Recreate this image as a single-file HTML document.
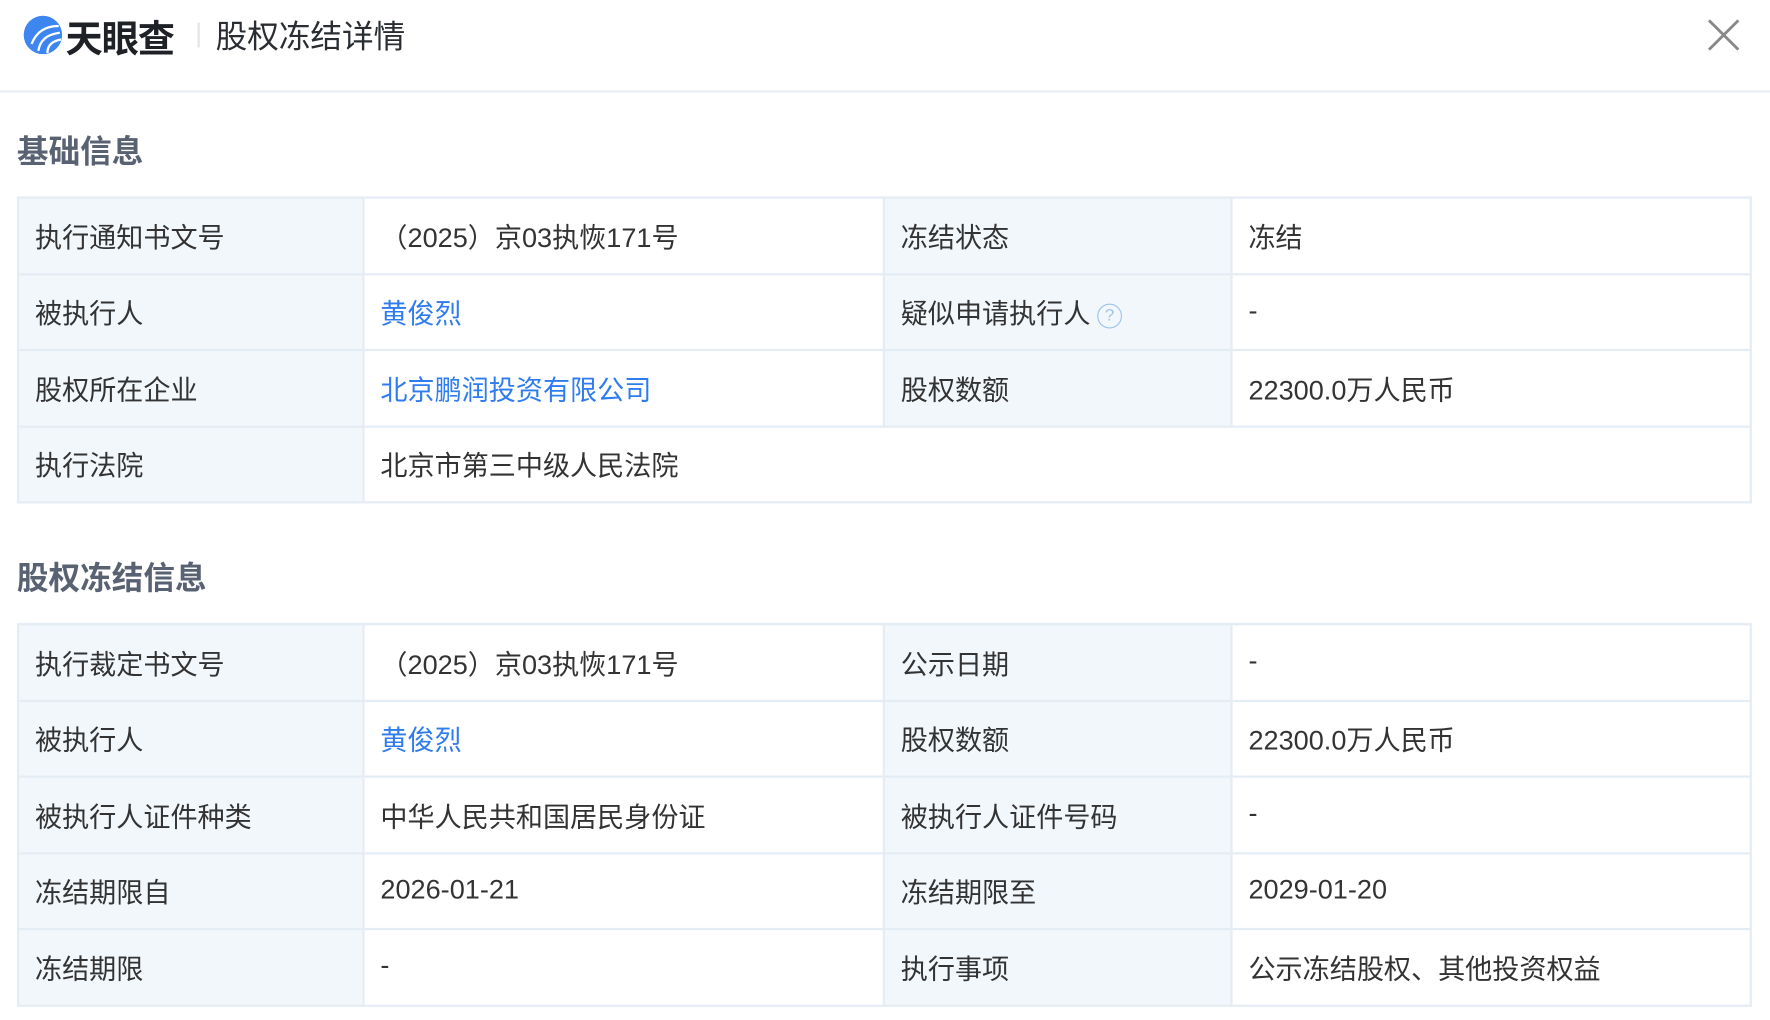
<!DOCTYPE html>
<html><head><meta charset="utf-8"><style>
html,body{margin:0;padding:0;background:#fff;overflow:hidden}
#w{width:1568px;height:904px;transform:scale(1.1288);transform-origin:0 0;position:relative;font-family:"Liberation Sans","Noto Sans CJK SC",sans-serif;color:#333}
.hd{position:absolute;left:0;top:0;width:1568px;height:80px;border-bottom:2px solid #e9eef3}
.brand{position:absolute;left:58px;top:8px;font-size:33px;font-weight:bold;color:#1e2226;letter-spacing:-1px}
.sep{position:absolute;left:175px;top:20px;width:2px;height:22px;background:#e3e6ea}
.ttl{position:absolute;left:191px;top:11px;font-size:28px;color:#2a2e33}
.close{position:absolute;left:1510px;top:14px}
h2{position:absolute;left:15px;margin:0;font-size:28px;font-weight:bold;color:#596273}
table{position:absolute;left:15px;width:1537px;border-collapse:collapse;font-size:24px}
td{border:2px solid #e5edf4;height:64px;padding:0 0 2px 14px;box-sizing:border-box}
td.l{background:#f2f7fb}
a{color:#2f7cf0;text-decoration:none}
.q{display:inline-block;width:20px;height:20px;border:1.5px solid #9cc4ee;border-radius:50%;color:#9cc4ee;font-size:15px;line-height:20px;text-align:center;vertical-align:2px;margin-left:6px}
</style></head><body><div id="w">
<div class="hd">
<svg style="position:absolute;left:20px;top:13px" width="36" height="36" viewBox="0 0 36 36"><circle cx="18" cy="18" r="17" fill="#3d86f0"/><path d="M8 26 Q14 10 32 10" stroke="#fff" stroke-width="2" fill="none"/><path d="M14 32 Q16 18 33 16" stroke="#fff" stroke-width="2" fill="none"/><path d="M22 34 Q22 24 34 22" stroke="#fff" stroke-width="2" fill="none"/></svg>
<div class="brand">天眼查</div><div class="sep"></div><div class="ttl">股权冻结详情</div>
<svg class="close" width="34" height="34" viewBox="0 0 34 34"><path d="M4 4L30 30M30 4L4 30" stroke="#888" stroke-width="2.5"/></svg>
</div>
<h2 style="top:113px">基础信息</h2>
<table style="top:174px">
<colgroup><col style="width:306px"><col style="width:461px"><col style="width:308px"><col></colgroup>
<tr style="height:68px"><td class="l">执行通知书文号</td><td>（2025）京03执恢171号</td><td class="l">冻结状态</td><td>冻结</td></tr>
<tr style="height:67px"><td class="l">被执行人</td><td><a>黄俊烈</a></td><td class="l">疑似申请执行人<span class="q">?</span></td><td>-</td></tr>
<tr style="height:68px"><td class="l">股权所在企业</td><td><a>北京鹏润投资有限公司</a></td><td class="l">股权数额</td><td>22300.0万人民币</td></tr>
<tr style="height:67px"><td class="l">执行法院</td><td colspan="3">北京市第三中级人民法院</td></tr>
</table>
<h2 style="top:491px">股权冻结信息</h2>
<table style="top:552px">
<colgroup><col style="width:306px"><col style="width:461px"><col style="width:308px"><col></colgroup>
<tr style="height:68px"><td class="l">执行裁定书文号</td><td>（2025）京03执恢171号</td><td class="l">公示日期</td><td>-</td></tr>
<tr style="height:67px"><td class="l">被执行人</td><td><a>黄俊烈</a></td><td class="l">股权数额</td><td>22300.0万人民币</td></tr>
<tr style="height:68px"><td class="l">被执行人证件种类</td><td>中华人民共和国居民身份证</td><td class="l">被执行人证件号码</td><td>-</td></tr>
<tr style="height:67px"><td class="l">冻结期限自</td><td>2026-01-21</td><td class="l">冻结期限至</td><td>2029-01-20</td></tr>
<tr style="height:68px"><td class="l">冻结期限</td><td>-</td><td class="l">执行事项</td><td>公示冻结股权、其他投资权益</td></tr>
</table>
</div></body></html>
